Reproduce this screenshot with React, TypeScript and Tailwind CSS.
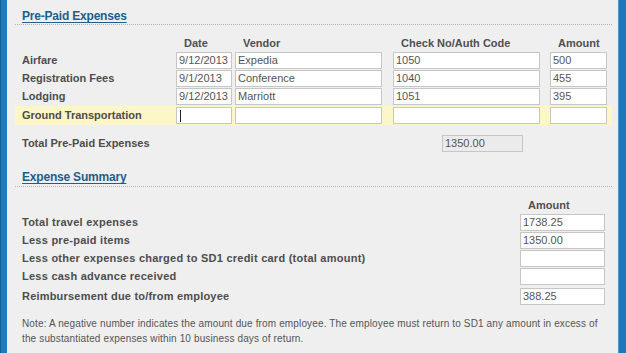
import React from "react";

const font = { fontFamily: '"Liberation Sans", Arial, sans-serif' };

function Box({ w, value, caret, disabled }: { w: string; value?: string; caret?: boolean; disabled?: boolean }) {
  return (
    <div
      className={`${w} h-[17px] border border-[#c6c6c6] ${disabled ? "bg-[#ebebeb]" : "bg-white"} pl-[2px] text-[11px] leading-[15px] text-[#555] flex items-center overflow-hidden whitespace-nowrap`}
    >
      {caret ? <span className="inline-block w-[1px] h-[12px] bg-[#222] ml-[1px]" /> : value}
    </div>
  );
}

function Heading({ text, pt }: { text: string; pt: string }) {
  return (
    <div className={`${pt} border-b border-dotted border-[#b5b5b5] pl-[7px] text-[12px] font-bold leading-[14px] tracking-[-0.2px]`}>
      <span className="text-[#1d5e8e] underline underline-offset-2">{text}</span>
    </div>
  );
}

const rows = [
  { label: "Airfare", date: "9/12/2013", vendor: "Expedia", check: "1050", amount: "500" },
  { label: "Registration Fees", date: "9/1/2013", vendor: "Conference", check: "1040", amount: "455" },
  { label: "Lodging", date: "9/12/2013", vendor: "Marriott", check: "1051", amount: "395" },
];

const summary = [
  { label: "Total travel expenses", value: "1738.25" },
  { label: "Less pre-paid items", value: "1350.00" },
  { label: "Less other expenses charged to SD1 credit card (total amount)", value: "" },
  { label: "Less cash advance received", value: "" },
];

export default function App() {
  return (
    <div className="w-[626px] h-[353px] flex bg-[#efefef] overflow-hidden" style={font}>
      <div className="w-[7px] h-full bg-[#1b7cc0] border-l border-[#135f98]" />
      <div className="flex-1 flex flex-col pl-[8px] pr-[6px] text-[#4d4d4d]">
        <Heading text="Pre-Paid Expenses" pt="pt-[9px] h-[25px]" />

        <div className="h-[27px] flex items-start pt-[12px] text-[11px] font-bold leading-[13px] text-[#505050]">
          <div className="w-[161px]" />
          <div className="w-[56px] pl-[8px]">Date</div>
          <div className="w-[3px]" />
          <div className="w-[147px] pl-[8px]">Vendor</div>
          <div className="w-[11px]" />
          <div className="w-[147px] pl-[8px]">Check No/Auth Code</div>
          <div className="w-[10px]" />
          <div className="w-[57px] pl-[8px]">Amount</div>
        </div>

        {rows.map((r) => (
          <div key={r.label} className="h-[18px] flex items-start">
            <div className="w-[161px] pl-[7px] h-[17px] flex items-center text-[11px] font-bold">{r.label}</div>
            <Box w="w-[56px]" value={r.date} />
            <div className="w-[3px]" />
            <Box w="w-[147px]" value={r.vendor} />
            <div className="w-[11px]" />
            <Box w="w-[147px]" value={r.check} />
            <div className="w-[10px]" />
            <Box w="w-[57px]" value={r.amount} />
          </div>
        ))}

        <div className="h-[19px] flex items-start pt-[1px] bg-[#fdf6c6]">
          <div className="w-[161px] pl-[7px] h-[17px] flex items-center text-[11px] font-bold">Ground Transportation</div>
          <Box w="w-[56px]" caret />
          <div className="w-[3px]" />
          <Box w="w-[147px]" value="" />
          <div className="w-[11px]" />
          <Box w="w-[147px]" value="" />
          <div className="w-[10px]" />
          <Box w="w-[57px]" value="" />
        </div>

        <div className="mt-[10px] h-[17px] flex items-center">
          <div className="w-[427px] pl-[7px] text-[11px] font-bold">Total Pre-Paid Expenses</div>
          <Box w="w-[81px]" value="1350.00" disabled />
        </div>

        <Heading text="Expense Summary" pt="pt-[18px] h-[35px]" />

        <div className="h-[27px] flex pt-[12px] text-[11px] font-bold leading-[13px] text-[#505050]">
          <div className="w-[505px]" />
          <div className="pl-[8px]">Amount</div>
        </div>

        {summary.map((s) => (
          <div key={s.label} className="h-[18px] flex items-start">
            <div className="w-[505px] pl-[7px] h-[17px] flex items-center text-[11px] font-bold tracking-[0.25px]">{s.label}</div>
            <Box w="w-[85px]" value={s.value} />
          </div>
        ))}
        <div className="mt-[2px] h-[18px] flex items-start">
          <div className="w-[505px] pl-[7px] h-[17px] flex items-center text-[11px] font-bold tracking-[0.2px]">Reimbursement due to/from employee</div>
          <Box w="w-[85px]" value="388.25" />
        </div>

        <div className="mt-[10px] pl-[7px] text-[10px] leading-[15px] text-[#555] tracking-[0.14px] whitespace-nowrap">
          Note: A negative number indicates the amount due from employee. The employee must return to SD1 any amount in excess of
          <br />
          the substantiated expenses within 10 business days of return.
        </div>
      </div>
      <div className="w-[8px] h-full bg-[#1b78bb] border-l border-[#4e9ad2]" />
    </div>
  );
}
